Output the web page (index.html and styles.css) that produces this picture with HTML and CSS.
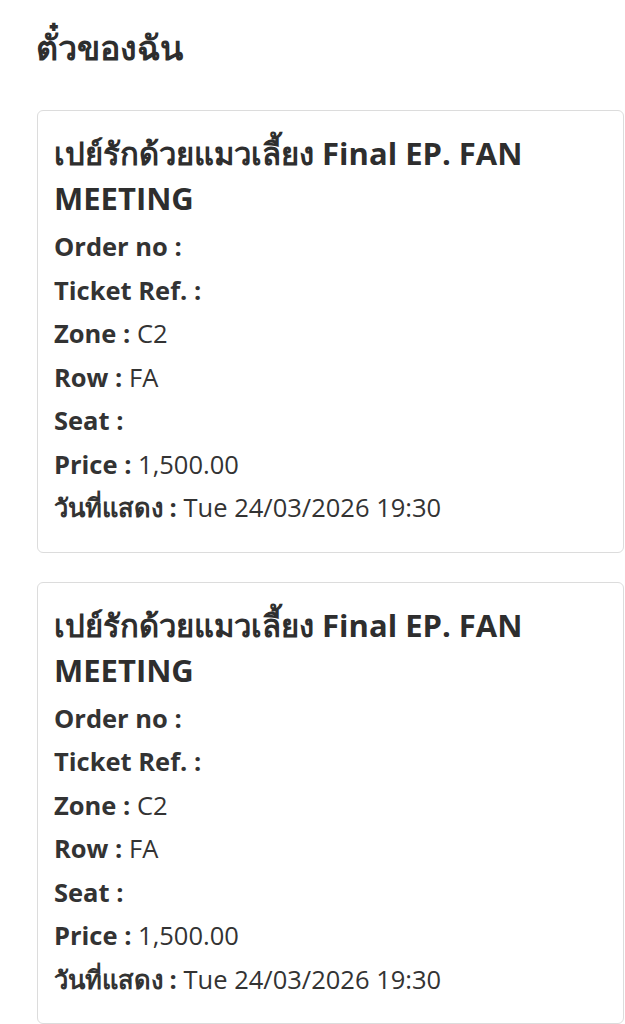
FILE: index.html
```html
<!DOCTYPE html>
<html lang="th">
<head>
<meta charset="utf-8">
<title>ตั๋วของฉัน</title>
<link rel="stylesheet" href="styles.css">
</head>
<body>
<main class="page">
  <h1 class="page-title">ตั๋วของฉัน</h1>
  <section class="ticket">
    <h2 class="ticket-title">เปย์รักด้วยแมวเลี้ยง Final EP. FAN MEETING</h2>
    <div class="row"><span class="label">Order no :</span> <span class="value"></span></div>
    <div class="row"><span class="label">Ticket Ref. :</span> <span class="value"></span></div>
    <div class="row"><span class="label">Zone :</span> <span class="value">C2</span></div>
    <div class="row"><span class="label">Row :</span> <span class="value">FA</span></div>
    <div class="row"><span class="label">Seat :</span> <span class="value"></span></div>
    <div class="row"><span class="label">Price :</span> <span class="value">1,500.00</span></div>
    <div class="row"><span class="label">วันที่แสดง :</span> <span class="value">Tue 24/03/2026 19:30</span></div>
  </section>
  <section class="ticket">
    <h2 class="ticket-title">เปย์รักด้วยแมวเลี้ยง Final EP. FAN MEETING</h2>
    <div class="row"><span class="label">Order no :</span> <span class="value"></span></div>
    <div class="row"><span class="label">Ticket Ref. :</span> <span class="value"></span></div>
    <div class="row"><span class="label">Zone :</span> <span class="value">C2</span></div>
    <div class="row"><span class="label">Row :</span> <span class="value">FA</span></div>
    <div class="row"><span class="label">Seat :</span> <span class="value"></span></div>
    <div class="row"><span class="label">Price :</span> <span class="value">1,500.00</span></div>
    <div class="row"><span class="label">วันที่แสดง :</span> <span class="value">Tue 24/03/2026 19:30</span></div>
  </section>
</main>
</body>
</html>
```

FILE: styles.css
```css
* { box-sizing: border-box; }

html, body {
  margin: 0;
  padding: 0;
  background: #ffffff;
}

body {
  font-family: "Open Sans", "Noto Sans", "DejaVu Sans", sans-serif;
  color: #333333;
}

.page {
  padding: 26px 1px 0 37px;
  display: flex;
  flex-direction: column;
  gap: 29px;
}

.page-title {
  margin: 0 0 12px -1px;
  font-size: 34px;
  line-height: 43px;
  font-weight: 700;
  color: #2e2e2e;
}

.ticket {
  border: 1px solid #dcdcdc;
  border-radius: 6px;
  padding: 20px 16px 22px 16px;
}

.ticket-title {
  margin: 0 0 4px 0;
  font-size: 31px;
  line-height: 45px;
  font-weight: 700;
  color: #2e2e2e;
}

.row {
  font-size: 25.5px;
  line-height: 43.5px;
  color: #333333;
}

.label {
  font-weight: 700;
}

.value {
  font-weight: 400;
}
```
